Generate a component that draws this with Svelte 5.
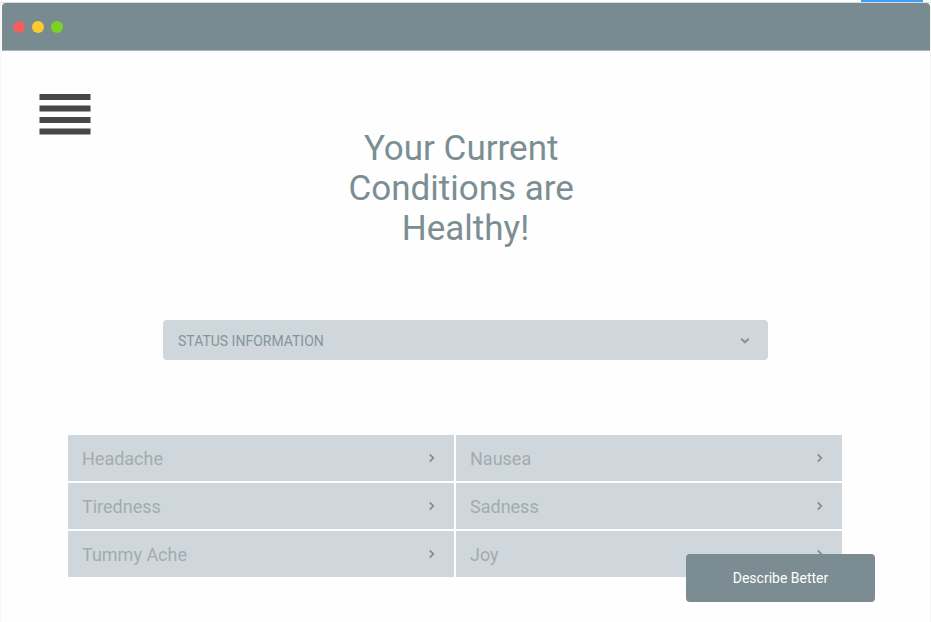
<script>
  const conditions = ['Headache', 'Nausea', 'Tiredness', 'Sadness', 'Tummy Ache', 'Joy'];
  const headline = ['Your Current ', 'Conditions are ', 'Healthy!'];
  const lights = ['red', 'yellow', 'green'];
</script>

<div class="page">
  <div class="accent"></div>
  <div class="window">
    <header class="titlebar">
      {#each lights as light}
        <span class="light {light}"></span>
      {/each}
    </header>

    <main>
      <button class="menu" aria-label="Menu">
        <svg width="52" height="42" viewBox="0 0 52 42" aria-hidden="true">
          <path d="M0.5 1h51v6h-51zM0.5 12.5h51v6h-51zM0.5 24h51v6h-51zM0.5 35.4h51v6h-51z" fill="#464646" />
        </svg>
      </button>

      <h1>{headline.join('\n')}</h1>

      <div class="status">
        <select aria-label="Status information">
          <option>STATUS INFORMATION</option>
        </select>
        <svg class="down" width="10" height="8" viewBox="0 0 10 8" aria-hidden="true">
          <path d="M1.2 1.7L5 5.3L8.8 1.7" fill="none" stroke="#8a9194" stroke-width="2" />
        </svg>
      </div>

      <section class="conditions">
        <div class="grid">
          {#each conditions as condition}
            <button class="condition">
              {condition}
              <svg width="8" height="10" viewBox="0 0 8 10" aria-hidden="true">
                <path d="M1.7 1.4L5.3 5L1.7 8.6" fill="none" stroke="#85898b" stroke-width="1.7" />
              </svg>
            </button>
          {/each}
        </div>
        <button class="describe">Describe Better</button>
      </section>
    </main>
  </div>
</div>

<style>
  :global(body) {
    background: #fefefe;
  }

  .page,
  button,
  select {
    font-family: Roboto, 'Liberation Sans', sans-serif;
  }

  .page {
    display: flow-root;
    min-height: 100vh;
    box-sizing: border-box;
  }

  button {
    border: 0;
    padding: 0;
    cursor: pointer;
  }

  .accent {
    width: 62px;
    height: 2px;
    margin: 0 8px 0 auto;
    background: #3c9ff2;
  }

  .window {
    border: 1px solid #f6f6f6;
    border-top-color: #d9dddd;
    border-bottom: 0;
    min-height: calc(100vh - 3px);
  }

  .titlebar {
    display: flex;
    align-items: center;
    gap: 7px;
    height: 48px;
    box-sizing: border-box;
    margin-left: 1px;
    padding-left: 11px;
    border-bottom: 1px solid #a9b5b8;
    border-radius: 4px 4px 0 0;
    background: #788b90;
  }

  .light {
    width: 12px;
    height: 12px;
    border-radius: 50%;
  }

  .red {
    background: #f15f5e;
  }

  .yellow {
    background: #ffca2f;
  }

  .green {
    background: #7ed321;
  }

  main {
    padding-top: 42px;
  }

  .menu {
    display: block;
    margin-left: 38px;
    background: none;
  }

  .menu svg {
    display: block;
  }

  h1 {
    margin: -6px 0 0;
    color: #7b8e93;
    font-size: 35px;
    font-weight: 400;
    line-height: 40px;
    text-align: center;
    white-space: break-spaces;
  }

  .status {
    position: relative;
    margin: 71px 162px 0;
  }

  select {
    display: block;
    width: 100%;
    height: 40px;
    padding: 1px 15px 0;
    border: 0;
    border-radius: 4px;
    background: #cfd7dd;
    color: #84959a;
    font-size: 14px;
    appearance: none;
  }

  .down {
    position: absolute;
    top: 17px;
    right: 18px;
    pointer-events: none;
  }

  .conditions {
    position: relative;
    margin: 75px 88px 44px 67px;
  }

  .grid {
    display: grid;
    grid-template-columns: 1fr 1fr;
    gap: 2px;
  }

  .condition {
    display: flex;
    align-items: center;
    justify-content: space-between;
    height: 46px;
    padding: 0 18px 0 14px;
    background: #cfd7dd;
    color: #a3abae;
    font-size: 18px;
  }

  .describe {
    position: absolute;
    right: -33px;
    bottom: -25px;
    width: 189px;
    height: 48px;
    border-radius: 4px;
    background: #7b8c92;
    color: #fff;
    font-size: 14px;
  }
</style>
